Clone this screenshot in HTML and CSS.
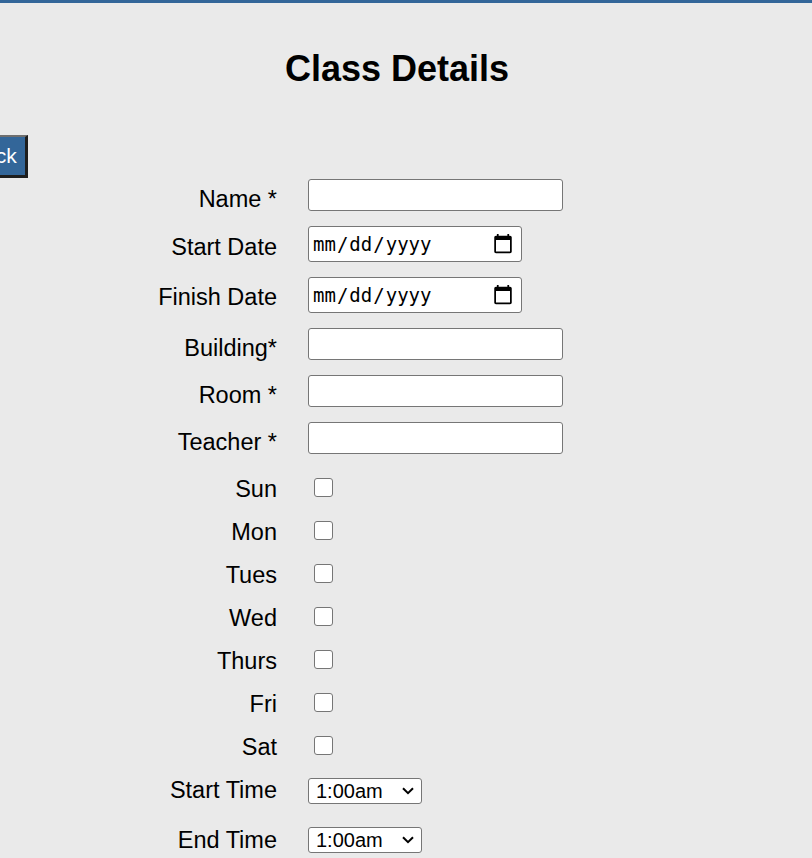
FILE: index.html
```html
<!DOCTYPE html>
<html lang="en">
<head>
<meta charset="utf-8">
<title>Class Details</title>
<link rel="stylesheet" href="styles.css">
</head>
<body>
<div class="topbar"></div>
<h1 class="title">Class Details</h1>
<div class="back-wrap"><button class="back" type="button">Back</button></div>
<form class="form">
  <div class="row row-text"><label class="lbl">Name *</label><input class="text" type="text"></div>
  <div class="row row-date"><label class="lbl lbl-d1">Start Date</label><input class="date" type="date"></div>
  <div class="row row-date"><label class="lbl lbl-d2">Finish Date</label><input class="date" type="date"></div>
  <div class="row row-text"><label class="lbl">Building*</label><input class="text" type="text"></div>
  <div class="row row-text"><label class="lbl">Room *</label><input class="text" type="text"></div>
  <div class="row row-text"><label class="lbl">Teacher *</label><input class="text" type="text"></div>
  <div class="days">
    <div class="row row-check"><label class="lbl lbl-c">Sun</label><input class="check" type="checkbox"></div>
    <div class="row row-check"><label class="lbl lbl-c">Mon</label><input class="check" type="checkbox"></div>
    <div class="row row-check"><label class="lbl lbl-c">Tues</label><input class="check" type="checkbox"></div>
    <div class="row row-check"><label class="lbl lbl-c">Wed</label><input class="check" type="checkbox"></div>
    <div class="row row-check"><label class="lbl lbl-c">Thurs</label><input class="check" type="checkbox"></div>
    <div class="row row-check"><label class="lbl lbl-c">Fri</label><input class="check" type="checkbox"></div>
    <div class="row row-check"><label class="lbl lbl-c">Sat</label><input class="check" type="checkbox"></div>
  </div>
  <div class="times">
    <div class="row row-time row-start"><label class="lbl lbl-t1">Start Time</label><span class="select-wrap"><select class="time"><option>1:00am</option><option>2:00am</option></select><svg class="chev" width="12" height="8" viewBox="0 0 12 8"><path d="M1 1.2 L6 6.2 L11 1.2" fill="none" stroke="#000" stroke-width="2"/></svg></span></div>
    <div class="row row-time row-end"><label class="lbl lbl-t2">End Time</label><span class="select-wrap"><select class="time"><option>1:00am</option><option>2:00am</option></select><svg class="chev" width="12" height="8" viewBox="0 0 12 8"><path d="M1 1.2 L6 6.2 L11 1.2" fill="none" stroke="#000" stroke-width="2"/></svg></span></div>
  </div>
</form>
</body>
</html>
```
FILE: styles.css
```css
html, body {
  margin: 0;
  padding: 0;
  background: #eaeaea;
  font-family: "Liberation Sans", Arial, sans-serif;
  color: #000;
  overflow: hidden;
}
.topbar {
  height: 3px;
  background: #336699;
}
.title {
  margin: 0;
  padding: 45px 18px 0 0;
  font-size: 36px;
  line-height: 41px;
  font-weight: bold;
  text-align: center;
}
.back-wrap {
  margin-top: 46px;
  height: 43px;
}
.back {
  display: block;
  margin: 0 0 0 -40px;
  height: 43px;
  box-sizing: border-box;
  padding: 0 8px;
  background: #336699;
  color: #fff;
  font-family: "Liberation Sans", Arial, sans-serif;
  font-size: 21px;
  line-height: 38px;
  border-style: solid;
  border-width: 2px 3px 3px 2px;
  border-color: #6f6f6f #1e1e1e #1e1e1e #6f6f6f;
}
.form {
  padding-top: 1px;
}
.row {
  display: flex;
  align-items: flex-start;
  margin-bottom: 15px;
}
.lbl {
  width: 277px;
  margin-right: 31px;
  text-align: right;
  font-size: 23.5px;
  line-height: 24px;
  flex-shrink: 0;
}
.row-text .lbl { margin-top: 8px; }
.lbl-d1 { margin-top: 9px; }
.lbl-d2 { margin-top: 8px; }
.lbl-c { margin-top: 4px; }
.lbl-t1 { margin-top: 0; }
.lbl-t2 { margin-top: 1px; }

.text {
  box-sizing: border-box;
  width: 255px;
  height: 32px;
  margin: 0;
  border: 1px solid #767676;
  border-radius: 3px;
  background: #fff;
  font-size: 20px;
  padding: 1px 3px;
}
.date {
  box-sizing: border-box;
  width: 214px;
  height: 36px;
  margin: 0;
  border: 1px solid #767676;
  border-radius: 3px;
  background: #fff;
  font-family: "DejaVu Sans Mono", "Liberation Mono", monospace;
  font-size: 19px;
  padding: 1px 3px;
  color: #000;
}
.date::-webkit-calendar-picker-indicator {
  width: 22px;
  height: 22px;
  padding: 0;
  margin-right: 4px;
}
.days {
  padding-top: 4px;
}
.row-check {
  height: 28px;
}
.check {
  appearance: none;
  -webkit-appearance: none;
  box-sizing: border-box;
  width: 19px;
  height: 19px;
  margin: 5px 0 0 6px;
  border: 1px solid #767676;
  border-radius: 3px;
  background: #fff;
}
.times {
  padding-top: 4px;
}
.row-start {
  margin-bottom: 23px;
}
.select-wrap {
  position: relative;
  display: block;
  width: 114px;
  height: 26px;
}
.time {
  appearance: none;
  -webkit-appearance: none;
  display: block;
  box-sizing: border-box;
  width: 114px;
  height: 26px;
  margin: 0;
  padding: 0 0 0 7px;
  border: 1px solid #767676;
  border-radius: 3px;
  background-color: #fff;
  font-family: "Liberation Sans", Arial, sans-serif;
  font-size: 20px;
  line-height: 24px;
  color: #000;
}
.chev {
  position: absolute;
  right: 8px;
  top: 9px;
  pointer-events: none;
}
```
